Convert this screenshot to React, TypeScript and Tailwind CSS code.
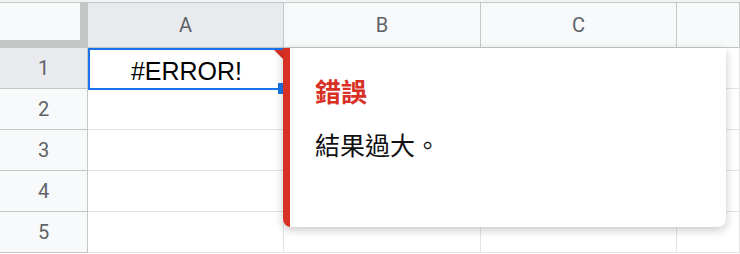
import React from 'react';

const cols = ['A', 'B', 'C', ''];
const rows = [1, 2, 3, 4, 5];

export default function App() {
  return (
    <div className="relative w-[740px] h-[254px] overflow-hidden bg-white font-['Roboto','Liberation_Sans',sans-serif]">
      {/* top strip */}
      <div className="h-[3px] bg-[#f1f3f4] border-b border-[#c4c7c5]" />

      <div className="grid grid-cols-[88px_196px_197px_196px_1fr] grid-rows-[45px_41px_41px_41px_41px_41px]">
        {/* corner */}
        <div className="bg-[#f8f9fa] border-r-8 border-b-8 border-[#c4c7c5]" />
        {cols.map((c, i) => (
          <div
            key={c + i}
            className={`flex items-center justify-center border-r border-b border-[#c4c7c5] text-[20px] text-[#5f6368] ${
              i === 0 ? 'bg-[#e8eaed]' : 'bg-[#f8f9fa]'
            }`}
          >
            {c}
          </div>
        ))}

        {rows.map((r) => (
          <React.Fragment key={r}>
            <div
              className={`flex items-center justify-center border-r border-b border-[#c4c7c5] text-[20px] text-[#5f6368] ${
                r === 1 ? 'bg-[#e8eaed]' : 'bg-[#f8f9fa]'
              }`}
            >
              {r}
            </div>
            {cols.map((c, i) => (
              <div key={c + i} className="border-r border-b border-[#e2e3e3] bg-white" />
            ))}
          </React.Fragment>
        ))}
      </div>

      {/* selected cell A1 */}
      <div className="absolute left-[88px] top-[48px] w-[197px] h-[42px] border-[2.5px] border-[#1a73e8] flex items-center justify-center pt-[4px]">
        <span className="font-['Liberation_Sans',Arial,sans-serif] text-[25px] text-black leading-none">#ERROR!</span>
        {/* error marker */}
        <div className="absolute right-0 top-0 w-0 h-0 border-t-[9px] border-l-[9px] border-t-[#d93025] border-l-transparent" />
      </div>
      {/* fill handle */}
      <div className="absolute left-[278px] top-[83px] w-[11px] h-[11px] bg-[#1a73e8]" />

      {/* error popup */}
      <div className="absolute left-[283px] top-[48px] w-[443px] h-[179px] flex bg-white rounded-b-[8px] shadow-[0_3px_10px_rgba(0,0,0,0.22)] overflow-hidden">
        <div className="w-[7px] bg-[#d93025]" />
        <div className="flex flex-col pl-[25px] pt-[28px] font-['Noto_Sans_CJK_TC','Noto_Sans',sans-serif]">
          <div className="text-[26px] leading-[30px] font-bold text-[#d93025]">錯誤</div>
          <div className="mt-[23px] text-[25px] leading-[30px] text-[#111111]">結果過大。</div>
        </div>
      </div>
    </div>
  );
}
